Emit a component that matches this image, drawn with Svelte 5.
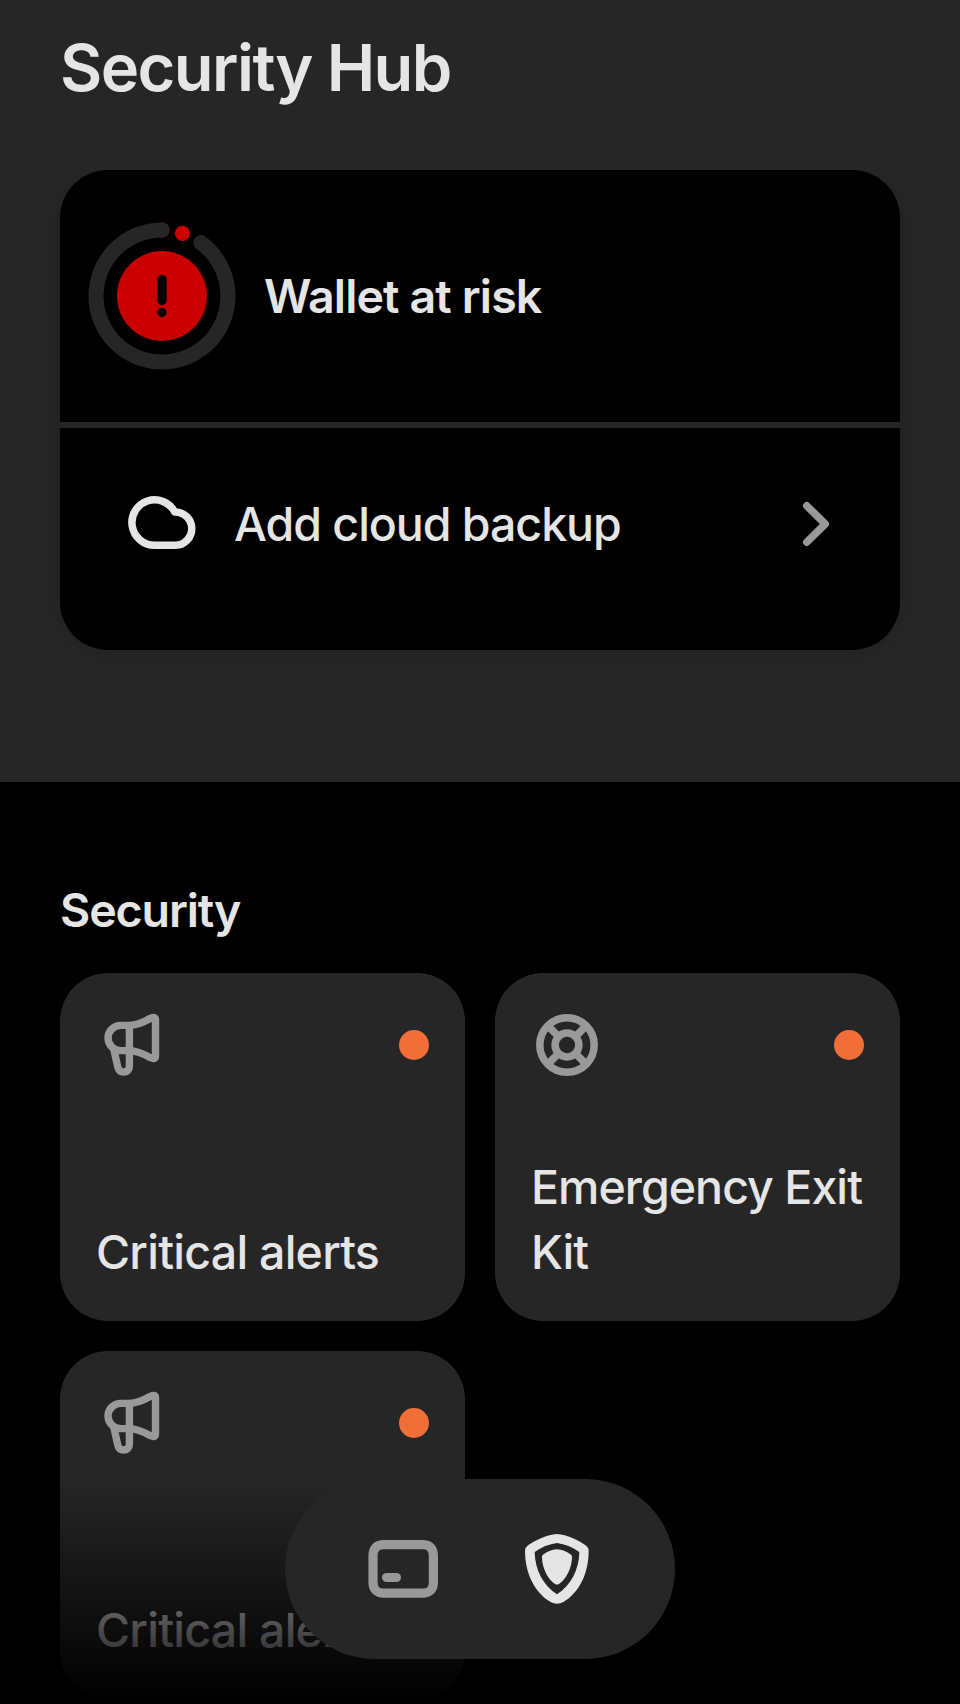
<script>
  const tiles = [
    { icon: 'megaphone', label: 'Critical alerts' },
    { icon: 'lifebuoy', label: 'Emergency Exit Kit' },
    { icon: 'megaphone', label: 'Critical alerts' }
  ];
</script>

<div class="screen">
  <header class="hero">
    <h1>Security Hub</h1>
    <section class="status-card">
      <div class="status">
        <svg width="150" height="150" viewBox="0 0 150 150" fill="none" stroke-width="15" stroke-linecap="round">
          <path d="M75 9h.01" stroke="#ca0000" />
          <path d="M113.8 21.6A66 66 0 1 1 75 9" stroke="#262626" />
          <circle cx="95.4" cy="12.3" r="7.6" fill="#ca0000" />
          <circle cx="75" cy="75" r="45" fill="#ca0000" />
          <path d="M75 58.6V79.4" stroke="#000" stroke-width="9.3" />
          <circle cx="75" cy="91.4" r="4.6" fill="#000" />
        </svg>
        <span>Wallet at risk</span>
      </div>
      <div class="action">
        <svg width="72" height="72" viewBox="126 488 72 72" fill="none" stroke="#e5e5e5" stroke-width="7.5" stroke-linejoin="round">
          <path d="M174.7 511.9A22.7 22.7 0 1 0 154.6 545.2H175.5A16.65 16.65 0 1 0 174.7 511.9Z" />
        </svg>
        <span>Add cloud backup</span>
        <svg class="chevron" width="72" height="72" viewBox="780 488 72 72" fill="none" stroke="#999" stroke-width="7.5" stroke-linecap="round" stroke-linejoin="round">
          <path d="M806.8 505.8 825.2 524 806.8 542.2" />
        </svg>
      </div>
    </section>
  </header>

  <main>
    <h2>Security</h2>
    <div class="grid">
      {#each tiles as tile}
        <article class="tile">
          <div class="tile-top">
            {#if tile.icon === 'megaphone'}
              <svg width="72" height="72" viewBox="96 1009 72 72" fill="none" stroke="#999" stroke-width="7.4" stroke-linejoin="round">
                <path d="M129.3 1025.4H120.6A12.6 12.6 0 0 0 120.6 1050.6H129.3C137 1050.6 144 1054 150.5 1057.7Q155.5 1059.9 155.5 1056V1020Q155.5 1016.1 150.5 1018.3C144 1022 137 1025.4 129.3 1025.4Z" />
                <path d="M113.7 1049 117.9 1067.5C118.6 1070.7 120.8 1072 123.7 1072 127 1072 129.4 1069.8 129.4 1066.5V1025.4" />
              </svg>
            {:else}
              <svg width="72" height="72" viewBox="0 0 72 72" fill="none" stroke="#999" stroke-width="7.5">
                <circle cx="36" cy="36" r="27.2" />
                <circle cx="36" cy="36" r="11.9" />
                <path d="M17.5 17.5 27.6 27.6M54.5 17.5 44.4 27.6M17.5 54.5 27.6 44.4M54.5 54.5 44.4 44.4" />
              </svg>
            {/if}
            <i class="dot"></i>
          </div>
          <span class={tile.icon}>{tile.label}</span>
        </article>
      {/each}
    </div>
  </main>

  <div class="fade"></div>
  <nav>
    <svg width="90" height="90" viewBox="358 1524 90 90" fill="none">
      <path d="M384 1544.7H422.4Q433.4 1544.7 433.4 1556V1582Q433.4 1593.2 422.4 1593.2H384Q373 1593.2 373 1582V1556Q373 1544.7 384 1544.7Z" stroke="#999" stroke-width="9.2" />
      <rect x="382" y="1573" width="19" height="9" rx="4.5" fill="#999" />
    </svg>
    <svg width="90" height="90" viewBox="486 162 270 270" fill="#e5e5e5">
      <path fill-rule="evenodd" d="M621 192C650 194 687 211 707 226Q716 233 716 242C716 315 684 370 640 396Q621 407 602 396C558 370 525 315 525 242Q525 233 534 226C555 211 592 194 621 192ZM621 219C645 222 668 232 688 246 687 300 662 347 621 373 580 347 555 300 554 246 574 232 597 222 621 219Z" />
      <path d="M621 238C637 239 652 245 664 255Q667 258 666 263C665 295 648 328 627 342Q621 345 615 342C594 328 577 295 576 263Q575 258 578 255C590 245 605 239 621 238Z" />
    </svg>
  </nav>
</div>

<style>
  :global(body) {
    background: #000;
  }
  .screen {
    position: relative;
    box-sizing: border-box;
    width: 960px;
    height: 1704px;
    overflow: hidden;
    background: #000;
    color: #e5e5e5;
    font: 500 46.5px/65px Inter, sans-serif;
  }
  svg {
    display: block;
    flex: none;
  }
  .hero {
    box-sizing: border-box;
    height: 782px;
    padding: 23px 60px 0;
    background: #262626;
  }
  h1 {
    margin: 0 0 57px;
    font-size: 65px;
    line-height: 90px;
    font-weight: 600;
    letter-spacing: -1.57px;
  }
  .status-card {
    height: 480px;
    border-radius: 48px;
    background: #000;
    box-shadow: 0 3px 14px rgba(0, 0, 0, 0.12);
  }
  .status {
    box-sizing: border-box;
    display: flex;
    align-items: center;
    gap: 27px;
    height: 258px;
    padding: 0 27px;
    border-bottom: 6px solid #262626;
    font-weight: 600;
    letter-spacing: -0.86px;
  }
  .status span,
  .action span {
    padding-top: 1px;
  }
  .action {
    display: flex;
    align-items: center;
    gap: 36px;
    padding: 60px 48px 0 66px;
    letter-spacing: -1.04px;
  }
  .chevron {
    margin-left: auto;
  }
  main {
    padding: 96px 60px 0;
  }
  h2 {
    margin: 0 0 30px;
    font-size: inherit;
    line-height: 65px;
    font-weight: 600;
    letter-spacing: -1.1px;
  }
  .grid {
    display: grid;
    grid-template-columns: 1fr 1fr;
    grid-auto-rows: 348px;
    gap: 30px;
  }
  .tile {
    box-sizing: border-box;
    display: flex;
    flex-direction: column;
    justify-content: space-between;
    padding: 36px;
    border-radius: 48px;
    background: #262626;
  }
  .tile-top {
    display: flex;
    align-items: center;
    justify-content: space-between;
  }
  .megaphone {
    letter-spacing: -0.75px;
  }
  .lifebuoy {
    letter-spacing: -0.96px;
  }
  .dot {
    width: 30px;
    height: 30px;
    border-radius: 50%;
    background: #f26e38;
  }
  .fade {
    position: absolute;
    inset: auto 0 0;
    height: 225px;
    background: linear-gradient(rgba(0, 0, 0, 0), #000);
  }
  nav {
    position: absolute;
    left: 285px;
    bottom: 45px;
    box-sizing: border-box;
    display: flex;
    align-items: center;
    justify-content: center;
    gap: 64px;
    width: 390px;
    height: 180px;
    border-radius: 90px;
    background: #262626;
  }
</style>
